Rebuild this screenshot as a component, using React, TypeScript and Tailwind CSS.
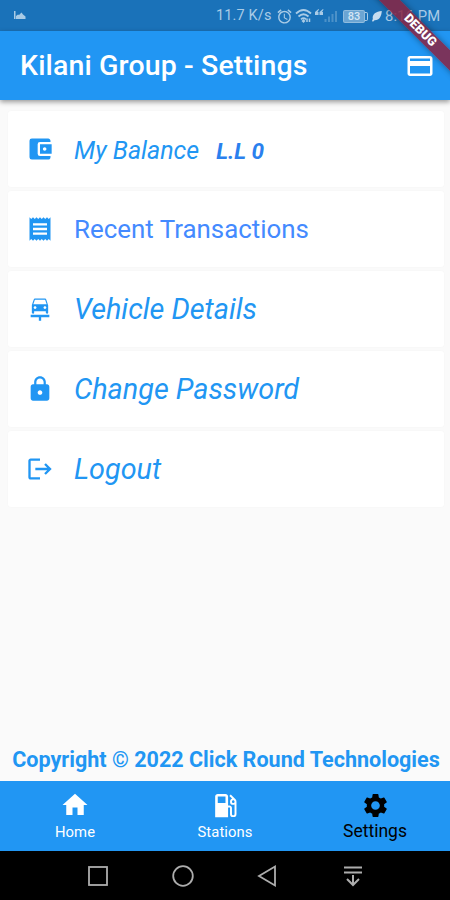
import type { ReactNode } from 'react';
import {
  MdAccountBalanceWallet,
  MdAlarm,
  MdCarRepair,
  MdHome,
  MdLocalGasStation,
  MdLock,
  MdLogout,
  MdOutlineCreditCard,
  MdReceipt,
  MdSettings,
} from 'react-icons/md';

function StatusBar() {
  return (
    <div className="flex h-[31px] items-center bg-[#1a72b9] pt-px text-[#a9cbe6]">
      <svg className="ml-[14px]" width="12" height="12" viewBox="0 0 12 12" fill="currentColor">
        <path d="M0 1h1.500v8H0z" />
        <path d="M2 9V6l2-1.500 1 .5L7.500 2.500l1.500 2L11.500 6.500V9z" />
      </svg>
      <span className="ml-[190px] w-[57px] whitespace-nowrap text-[14.500px] tracking-[0.150px]">11.7 K/s</span>
      <MdAlarm className="ml-[3px] size-[17px]" />
      <svg className="ml-[2px]" width="18" height="16" viewBox="0 0 18 16" fill="none" stroke="currentColor" strokeWidth="1.800">
        <path d="M1 5.500Q8.500-1.500 16 5.500M3.500 8.500Q8.500 4 13.500 8.500M6 11.300Q8.500 9 11 11.300" />
        <path d="M8.500 11l2 2-2 2-2-2z" fill="currentColor" stroke="none" />
        <path d="M12 10.500v3.500M14.500 10.500v3.500" strokeWidth="1.500" />
      </svg>
      <svg className="ml-[1px]" width="24" height="18" viewBox="0 0 24 18" fill="currentColor">
        <path d="M4.500 2L1 5v3h3.500V5h-1L5 2.500zM9 2L5.500 5v3H9V5H8l1.500-2.500z" />
        <path opacity=".35" d="M10.500 12h2v3h-2zM14 9.500h2V15h-2zM17.500 7h2v8h-2zM21 4h2v11h-2z" />
      </svg>
      <div className="ml-[5px] flex h-[13px] w-[22px] items-center justify-center rounded-[2px] border border-[#a9cbe6]/60 bg-[#6ba5d3] text-[11px] font-medium leading-none text-[#d5e6f4]">
        83
      </div>
      <div className="h-[9px] w-[3px] rounded-r-[2px] border border-l-0 border-[#a9cbe6]" />
      <svg className="ml-[4px]" width="10" height="12" viewBox="0 0 10 12" fill="#c6dcef">
        <path d="M9.800 1C4 1.500 0 4 .8 9L0 11l1 .7L2.500 10.300C7.500 10.500 9.500 6 9.800 1z" />
      </svg>
      <span className="ml-[3px] whitespace-nowrap text-[14.800px] tracking-[0.100px]">8:16 PM</span>
    </div>
  );
}

function MenuRow({ icon, children }: { icon: ReactNode; children: ReactNode }) {
  return (
    <div className="flex h-[76px] items-center rounded-[3px] bg-white pl-[18px] text-[#2196f3] shadow-[0_0_2px_rgba(0,0,0,0.03)]">
      <div className="flex w-[48px] items-center">{icon}</div>
      {children}
    </div>
  );
}

function NavItem({ icon, label, active }: { icon: ReactNode; label: string; active?: boolean }) {
  return (
    <div className={`flex flex-1 flex-col items-center pt-[9px] ${active ? 'text-black' : 'text-white'}`}>
      <div className="flex h-[30px] items-center">{icon}</div>
      <span className={active ? 'text-[17.500px] leading-[22px]' : 'text-[14.800px] leading-[25px] tracking-[0.100px]'}>
        {label}
      </span>
    </div>
  );
}

export default function App() {
  return (
    <div className="relative flex h-[900px] w-[450px] flex-col overflow-hidden bg-[#fafafa] font-['Roboto',sans-serif]">
      <StatusBar />
      <header className="z-10 flex h-[69px] items-center justify-between bg-[#2196f3] pl-[20px] pr-[15px] text-white shadow-[0_2px_5px_rgba(0,0,0,0.4)]">
        <h1 className="whitespace-nowrap pt-[2px] text-[28.500px] font-medium tracking-[0.130px]">
          Kilani Group - Settings
        </h1>
        <MdOutlineCreditCard className="size-[30px]" />
      </header>

      <main className="flex flex-1 flex-col pl-[8px] pr-[6px] pt-[11px]">
        <div className="flex flex-col gap-[4px]">
          <MenuRow icon={<MdAccountBalanceWallet className="size-[28px]" />}>
            <span className="pt-[3px] text-[25px] italic">My Balance</span>
            <span className="ml-[17px] pt-[5px] text-[22.500px] font-bold italic text-[#2a80ee]">L.L 0</span>
          </MenuRow>
          <MenuRow icon={<MdReceipt className="size-[28px]" />}>
            <span className="text-[25.900px] text-[#448aff]">Recent Transactions</span>
          </MenuRow>
          <MenuRow icon={<MdCarRepair className="size-[28px]" />}>
            <span className="pt-[2px] text-[28.800px] italic">Vehicle Details</span>
          </MenuRow>
          <MenuRow icon={<MdLock className="size-[28px]" />}>
            <span className="pt-[2px] text-[28.800px] italic">Change Password</span>
          </MenuRow>
          <MenuRow icon={<MdLogout className="size-[28px]" />}>
            <span className="pt-[2px] text-[28.800px] italic">Logout</span>
          </MenuRow>
        </div>
        <p className="mt-auto -mr-[2px] -ml-[2px] mb-[7px] whitespace-nowrap text-center text-[21.560px] font-bold leading-[28px] text-[#2196f3]">
          Copyright © 2022 Click Round Technologies
        </p>
      </main>

      <nav className="flex h-[70px] bg-[#2196f3]">
        <NavItem icon={<MdHome className="size-[30px]" />} label="Home" />
        <NavItem icon={<MdLocalGasStation className="size-[31px]" />} label="Stations" />
        <NavItem icon={<MdSettings className="size-[29px]" />} label="Settings" active />
      </nav>

      <div className="flex h-[49px] items-center justify-between bg-black px-[86px]">
        <svg width="24" height="24" viewBox="0 0 24 24" fill="none" stroke="#adadad" strokeWidth="1.800">
          <rect x="3" y="3" width="18" height="18" />
        </svg>
        <svg width="24" height="24" viewBox="0 0 24 24" fill="none" stroke="#adadad" strokeWidth="1.800">
          <circle cx="12" cy="12" r="9.800" />
        </svg>
        <svg width="24" height="24" viewBox="0 0 24 24" fill="none" stroke="#adadad" strokeWidth="1.800">
          <path d="M20 2.500v19L4 12z" />
        </svg>
        <svg width="24" height="24" viewBox="0 0 24 24" fill="none" stroke="#adadad" strokeWidth="2">
          <path d="M4 3.500h18M4 8.500h18M13 11v9.500M7 15l6 6 6-6" />
        </svg>
      </div>

      {/* debug ribbon across the corner */}
      <div className="absolute right-[-70px] top-[23px] z-20 flex h-[15px] w-[200px] rotate-45 items-center justify-center bg-[#8a2341]/85 text-[12.500px] font-black text-white shadow-[0_0_6px_rgba(0,0,0,0.4)]">
        DEBUG
      </div>
    </div>
  );
}
